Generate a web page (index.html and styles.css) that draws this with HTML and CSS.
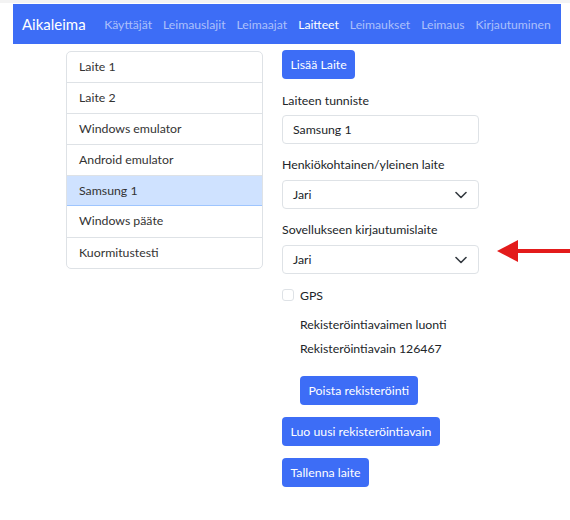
FILE: index.html
```html
<!DOCTYPE html>
<html lang="fi">
<head>
<meta charset="utf-8">
<title>Aikaleima</title>
<link rel="stylesheet" href="styles.css">
</head>
<body>
<div class="topstrip"></div>
<nav class="navbar">
  <span class="brand">Aikaleima</span>
  <ul class="nav">
    <li class="link">Käyttäjät</li>
    <li class="link">Leimauslajit</li>
    <li class="link">Leimaajat</li>
    <li class="link active">Laitteet</li>
    <li class="link">Leimaukset</li>
    <li class="link">Leimaus</li>
    <li class="link">Kirjautuminen</li>
  </ul>
</nav>
<main class="content">
  <ul class="list">
    <li class="item">Laite 1</li>
    <li class="item">Laite 2</li>
    <li class="item">Windows emulator</li>
    <li class="item">Android emulator</li>
    <li class="item selected">Samsung 1</li>
    <li class="item">Windows pääte</li>
    <li class="item">Kuormitustesti</li>
  </ul>
  <section class="form">
    <button class="btn btn-first">Lisää Laite</button>
    <label class="label">Laiteen tunniste</label>
    <div class="control">Samsung 1</div>
    <label class="label">Henkiökohtainen/yleinen laite</label>
    <div class="control select">Jari<svg class="chev" width="12" height="8" viewBox="0 0 12 8"><path d="M1 1.5l5 5 5-5" fill="none" stroke="#343a40" stroke-width="1.6" stroke-linecap="round" stroke-linejoin="round"/></svg></div>
    <label class="label">Sovellukseen kirjautumislaite</label>
    <div class="control select">Jari<svg class="chev" width="12" height="8" viewBox="0 0 12 8"><path d="M1 1.5l5 5 5-5" fill="none" stroke="#343a40" stroke-width="1.6" stroke-linecap="round" stroke-linejoin="round"/></svg></div>
    <div class="check"><span class="box"></span><span>GPS</span></div>
    <div class="reg">
      <div class="line">Rekisteröintiavaimen luonti</div>
      <div class="line">Rekisteröintiavain 126467</div>
      <button class="btn btn-remove">Poista rekisteröinti</button>
    </div>
    <button class="btn btn-new">Luo uusi rekisteröintiavain</button>
    <button class="btn btn-save">Tallenna laite</button>
  </section>
</main>
<svg class="arrow" width="74" height="26" viewBox="0 0 74 26"><path d="M20 11h54v4H20z" fill="#e31b1b"/><path d="M0 13L21 2v22z" fill="#e31b1b"/></svg>
</body>
</html>
```

FILE: styles.css
```css
* { box-sizing: border-box; }
html, body { margin: 0; padding: 0; background: #fff; }
body {
  font-family: "Segoe UI", "Lato", "Liberation Sans", sans-serif;
  font-size: 12.3px;
  color: #212529;
  position: relative;
  width: 570px;
  height: 520px;
  overflow: hidden;
}
.topstrip { height: 4px; background: #f3f3f3; border-bottom: 1px solid #fff; }
.navbar {
  margin: 0 9px 0 13px;
  height: 40px;
  background: #3d6df6;
  display: flex;
  align-items: center;
  padding-left: 9px;
}
.brand { color: #fff; font-size: 15px; margin-right: 13px; }
.nav { display: flex; list-style: none; margin: 0; padding: 0; }
.link { color: rgba(255,255,255,0.58); padding: 0 5.5px; font-size: 12.2px; }
.link.active { color: #fff; }
.content { display: flex; align-items: flex-start; padding-left: 66px; margin-top: 6px; gap: 19px; }
.list {
  list-style: none; margin: 1px 0 0; padding: 0;
  width: 197px;
  border: 1px solid #dee2e6;
  border-radius: 5px;
  overflow: hidden;
}
.item { height: 31px; line-height: 30px; padding-left: 12px; border-top: 1px solid #dee2e6; color: #333; }
.item:first-child { border-top: none; height: 30px; }
.item.selected { background: #cfe2ff; border-bottom: 1px solid #9ec5fe; height: 31px; }
.item.selected + .item { border-top: none; }
.form { width: 197px; display: flex; flex-direction: column; align-items: flex-start; }
.btn {
  font: inherit; color: #fff; background: #3d6df6;
  border: none; border-radius: 4px;
  height: 29px; padding: 0 8.5px;
}
.label { display: block; height: 20px; line-height: 20px; margin-top: 12px; margin-bottom: 4px; }
.control {
  width: 197px; height: 29px;
  border: 1px solid #dee2e6; border-radius: 4px;
  padding-left: 10px; line-height: 27px;
  display: flex; align-items: center; justify-content: space-between;
}
.control + .label { margin-top: 11px; margin-bottom: 5px; }
.select { padding-right: 11px; }
.check { display: flex; align-items: center; height: 20px; margin-top: 11px; gap: 6px; }
.box { width: 12px; height: 12px; border: 1px solid #dee2e6; border-radius: 3px; }
.reg { padding-left: 18px; display: flex; flex-direction: column; align-items: flex-start; margin-top: 10px; }
.line { height: 20px; line-height: 20px; margin-bottom: 4px; }
.btn-remove { margin-top: 13px; }
.btn-new { margin-top: 12px; }
.btn-save { margin-top: 12px; }
.arrow { position: absolute; left: 497px; top: 238px; }
```
